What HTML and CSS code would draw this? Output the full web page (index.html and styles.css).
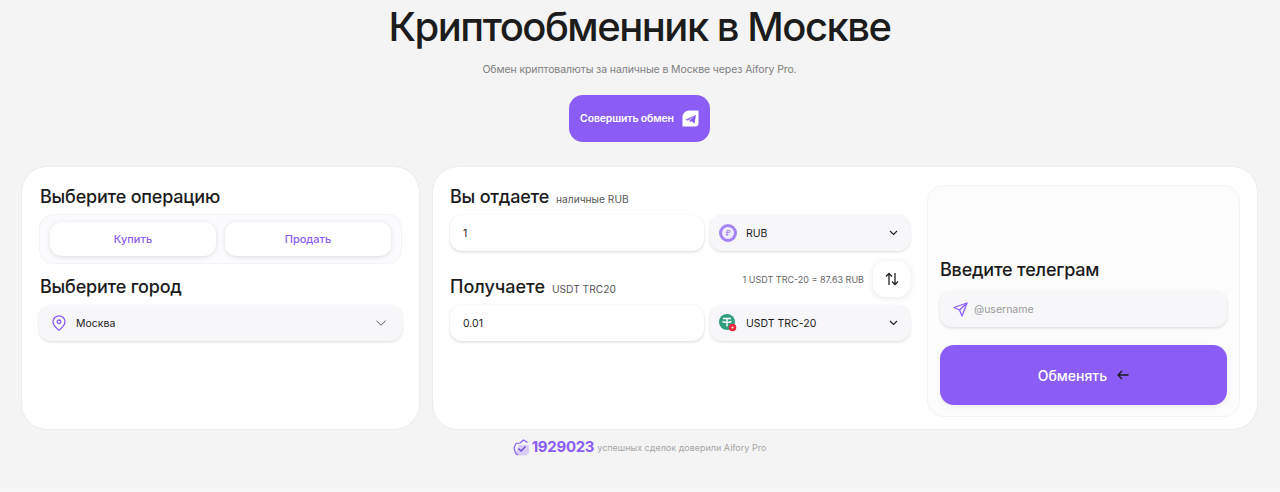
FILE: index.html
```html
<!DOCTYPE html>
<html lang="en">
<head>
  <meta charset="UTF-8">
  <title>Криптообменник в Москве</title>
  <link rel="stylesheet" href="styles.css">
</head>
<body>
  <header class="hero">
    <h1>Криптообменник в Москве</h1>
    <p class="subtitle">Обмен криптовалюты за наличные в Москве через Aifory Pro.</p>
    <a class="hero-btn">
      Совершить обмен
      <svg width="17" height="17" viewBox="0 0 17 17">
        <path d="M7 .5h9.500V13a3.500 3.500 0 0 1-3.500 3.500H.5V7A6.500 6.500 0 0 1 7 .5z" fill="#fff"/>
        <path d="M3 10 14 5l-1.500 8.500-3.500-2.500-1.500 1.500V10.500L12 6.500 6 10.500z" fill="#8b5cf6"/>
      </svg>
    </a>
  </header>

  <main class="cards">
    <section class="card card-left">
      <h2>Выберите операцию</h2>
      <div class="tabs">
        <button class="tab">Купить</button>
        <button class="tab">Продать</button>
      </div>
      <h2 class="city-title">Выберите город</h2>
      <div class="select select-city">
        <svg class="pin" width="14" height="16" viewBox="0 0 14 16" fill="none" stroke="#8b5cf6" stroke-width="1.300">
          <path d="M7 15.200C4.300 13.200 1 10.500 1 6.800a6 6 0 0 1 12 0c0 3.700-3.300 6.400-6 8.400z" stroke-linejoin="round"/>
          <circle cx="7" cy="6.800" r="1.800"/>
        </svg>
        <span class="select-text">Москва</span>
        <svg class="chev" width="10" height="6" viewBox="0 0 10 6" fill="none" stroke="#555" stroke-width="1"><path d="M.5.8 5 5.200 9.500.8"/></svg>
      </div>
    </section>

    <section class="card card-right">
      <div class="exchange">
        <div class="label-row">
          <h2>Вы отдаете</h2>
          <span class="label-note">наличные RUB</span>
        </div>
        <div class="field-row">
          <div class="amount">1</div>
          <div class="select select-coin">
            <svg width="18" height="18" viewBox="0 0 18 18">
              <circle cx="9" cy="9" r="7.500" fill="#f1ecff" stroke="#a684f7" stroke-width="3"/>
              <text x="9" y="11.500" class="rub-sign">₽</text>
            </svg>
            <span class="select-text">RUB</span>
            <svg class="chev" width="9" height="6" viewBox="0 0 9 6" fill="none" stroke="#222" stroke-width="1.200"><path d="M1 1l3.500 3.500L8 1"/></svg>
          </div>
        </div>
        <div class="label-row label-row-second">
          <div class="label-left">
            <h2>Получаете</h2>
            <span class="label-note">USDT TRC20</span>
          </div>
          <div class="rate-wrap">
            <span class="rate">1 USDT TRC-20 = 87.63 RUB</span>
            <button class="swap">
              <svg width="14" height="14" viewBox="0 0 14 14" fill="none" stroke="#222" stroke-width="1.300">
                <path d="M4 13V1.500M1 4.500l3-3 3 3M10 1v11.500M7 9.500l3 3 3-3"/>
              </svg>
            </button>
          </div>
        </div>
        <div class="field-row">
          <div class="amount">0.01</div>
          <div class="select select-coin">
            <svg width="18" height="18" viewBox="0 0 18 18">
              <circle cx="8" cy="8" r="8" fill="#2f9e7f"/>
              <path d="M4 4.500h8M8 4.500v8M3.500 7.500c2.500 1 6.500 1 9 0" fill="none" stroke="#fff" stroke-width="1.400"/>
              <circle cx="13.500" cy="13.500" r="3.800" fill="#e8283f"/>
              <circle cx="13.500" cy="13.500" r="1" fill="#fff"/>
            </svg>
            <span class="select-text">USDT TRC-20</span>
            <svg class="chev" width="9" height="6" viewBox="0 0 9 6" fill="none" stroke="#222" stroke-width="1.200"><path d="M1 1l3.500 3.500L8 1"/></svg>
          </div>
        </div>
      </div>

      <div class="panel">
        <h2>Введите телеграм</h2>
        <div class="select tg-input">
          <svg width="15" height="15" viewBox="0 0 15 15" fill="none" stroke="#8b5cf6" stroke-width="1.300" stroke-linejoin="round">
            <path d="M14 1 1 5.500l5.500 2.500L9 14z"/>
            <path d="M14 1 6.500 8"/>
          </svg>
          <span class="placeholder">@username</span>
        </div>
        <button class="submit">
          Обменять
          <svg width="12" height="10" viewBox="0 0 12 10" fill="none" stroke="#1a1a1a" stroke-width="1.300"><path d="M11.500 5H1M5 1 1 5l4 4"/></svg>
        </button>
      </div>
    </section>
  </main>

  <footer class="stats">
    <svg width="17" height="17" viewBox="0 0 17 17" fill="none" stroke="#8b5cf6" stroke-width="1.200">
      <path d="M6 6h10v8l-3 2.500H5L3 14z" fill="#d9ccfb" stroke="none"/>
      <path d="M1 9 3 4.500l4-.5 3.500-3 4 2.500" stroke-linejoin="round"/>
      <path d="M1 9l1.500 5L5 16" stroke-linejoin="round"/>
      <path d="M5.500 9.500l2.500 2.500L12.500 7.500" stroke="#6d45d8" stroke-width="1.400"/>
    </svg>
    <span class="stats-num">1929023</span>
    <span class="stats-text">успешных сделок доверили Aifory Pro</span>
  </footer>
</body>
</html>
```

FILE: styles.css
```css
* {
  box-sizing: border-box;
}

html {
  background: #f6f6f7;
}

body {
  margin: 0;
  height: 487px;
  padding: 0 22px 0 21px;
  background: #f4f4f4;
  font-family: Inter, "Noto Sans", sans-serif;
  color: #1c1c1c;
  overflow: hidden;
}

.hero {
  display: flex;
  flex-direction: column;
  align-items: center;
  padding-top: 1px;
}

.hero h1 {
  margin: 0;
  font-size: 40px;
  line-height: 52px;
  font-weight: 500;
  letter-spacing: -1.5px;
}

.subtitle {
  margin: 10px 0 0;
  font-size: 10.5px;
  line-height: 14px;
  letter-spacing: -0.1px;
  color: #808080;
}

.hero-btn {
  margin-top: 18px;
  width: 141px;
  height: 47px;
  display: flex;
  align-items: center;
  justify-content: center;
  gap: 8px;
  background: #8b5cf6;
  border-radius: 14px;
  color: #fff;
  font-size: 10.5px;
  font-weight: 600;
  letter-spacing: -0.15px;
}

.cards {
  margin-top: 24px;
  display: flex;
  gap: 12px;
  height: 264px;
}

.card {
  background: #fff;
  border: 1px solid #ececec;
  border-radius: 26px;
}

.card-left {
  width: 399px;
  flex: none;
  padding: 18px 17px;
}

.card-right {
  flex: 1;
  display: flex;
  padding: 18px 17px 12px;
  gap: 17px;
}

h2 {
  margin: 0;
  font-size: 18px;
  line-height: 23px;
  font-weight: 500;
  letter-spacing: -0.2px;
}

.card-left h2 {
  padding-left: 1px;
}

.tabs {
  margin-top: 6px;
  height: 50px;
  display: flex;
  gap: 9px;
  padding: 7px 10px;
  background: #fbfbfd;
  border: 1px solid #f3f3f5;
  border-radius: 14px;
}

.tab {
  flex: 1;
  border: none;
  background: #fff;
  border-radius: 12px;
  box-shadow: 0 1px 5px rgba(0, 0, 0, 0.12);
  color: #8b5cf6;
  font-family: inherit;
  font-size: 11px;
  font-weight: 500;
}

.city-title {
  margin-top: 11px;
}

.select {
  display: flex;
  align-items: center;
  height: 36px;
  background: #f7f7fa;
  border-radius: 12px;
  box-shadow: 0 1px 3px rgba(0, 0, 0, 0.14);
  font-size: 10.5px;
  font-weight: 400;
}

.select-city {
  margin-top: 7px;
  padding: 0 16px 0 13px;
}

.select-text {
  margin-left: 10px;
  flex: 1;
}

.select-coin .select-text {
  margin-left: 9px;
}

.exchange {
  width: 460px;
  flex: none;
}

.label-row {
  display: flex;
  align-items: baseline;
  gap: 7px;
  height: 23px;
  margin-bottom: 7px;
}

.label-row-second {
  height: auto;
  margin: 10px 0 8px;
  align-items: flex-end;
  justify-content: space-between;
}

.label-left {
  display: flex;
  align-items: baseline;
  gap: 7px;
  position: relative;
  top: 1px;
}

.label-left h2 {
  letter-spacing: 0;
}

.label-note {
  font-size: 10.2px;
  color: #555;
}

.rate-wrap {
  display: flex;
  align-items: center;
  gap: 9px;
}

.rate {
  font-size: 9px;
  color: #666;
}

.swap {
  width: 37px;
  height: 36px;
  display: flex;
  align-items: center;
  justify-content: center;
  padding: 0;
  border: none;
  background: #fff;
  border-radius: 12px;
  box-shadow: 0 1px 6px rgba(0, 0, 0, 0.1);
}

.field-row {
  display: flex;
  gap: 6px;
}

.amount {
  width: 254px;
  height: 36px;
  display: flex;
  align-items: center;
  padding-left: 13px;
  background: #fff;
  border-radius: 12px;
  box-shadow: 0 1px 3px rgba(0, 0, 0, 0.16);
  font-size: 10.5px;
  font-weight: 400;
}

.select-coin {
  flex: 1;
  padding: 0 12px 0 9px;
}

.rub-sign {
  font-size: 7px;
  fill: #a684f7;
  text-anchor: middle;
  font-weight: 600;
}

.panel {
  flex: 1;
  display: flex;
  flex-direction: column;
  justify-content: flex-end;
  padding: 0 12px 11px;
  background: #fcfcfd;
  border: 1px solid #f4f4f6;
  border-radius: 16px;
}

.tg-input {
  margin-top: 10px;
  padding-left: 13px;
}

.placeholder {
  margin-left: 6px;
  color: #999;
}

.submit {
  margin-top: 18px;
  height: 60px;
  display: flex;
  align-items: center;
  justify-content: center;
  gap: 10px;
  border: none;
  background: #8b5cf6;
  border-radius: 14px;
  box-shadow: 0 2px 6px rgba(0, 0, 0, 0.06);
  color: #fff;
  font-family: inherit;
  font-size: 14px;
  font-weight: 500;
}

.stats {
  margin-top: 8px;
  display: flex;
  align-items: center;
  justify-content: center;
}

.stats svg {
  margin-right: 2px;
}

.stats-num {
  font-size: 15px;
  line-height: 18px;
  font-weight: 700;
  letter-spacing: -0.3px;
  color: #8b5cf6;
}

.stats-text {
  margin-left: 3px;
  font-size: 9px;
  color: #a5a5a5;
}
```
